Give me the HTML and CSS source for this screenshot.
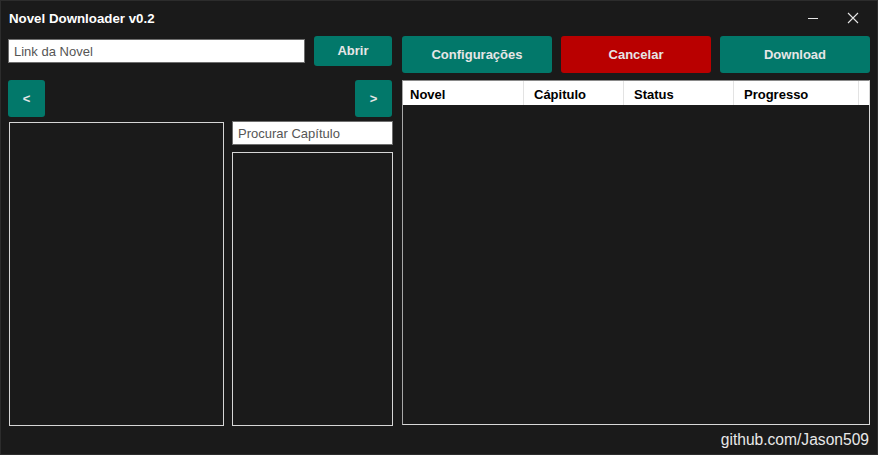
FILE: index.html
```html
<!DOCTYPE html>
<html lang="pt">
<head>
<meta charset="utf-8">
<title>Novel Downloader v0.2</title>
<link rel="stylesheet" href="styles.css">
</head>
<body>
<div class="window">
  <div class="titlebar">
    <span class="title">Novel Downloader v0.2</span>
    <div class="controls">
      <svg class="ctl ctl-min" width="12" height="12" viewBox="0 0 12 12"><line x1="1" y1="6.5" x2="11" y2="6.5" stroke="#e6e6e6" stroke-width="1"/></svg>
      <svg class="ctl ctl-close" width="12" height="12" viewBox="0 0 12 12"><path d="M1 1L11 11M11 1L1 11" stroke="#e6e6e6" stroke-width="1.1"/></svg>
    </div>
  </div>
  <div class="main">
    <div class="left">
      <div class="row-open">
        <div class="input link">Link da Novel</div>
        <div class="btn btn-open">Abrir</div>
      </div>
      <div class="row-nav">
        <div class="btn btn-nav">&lt;</div>
        <div class="btn btn-nav">&gt;</div>
      </div>
      <div class="row-lists">
        <div class="listbox novels"></div>
        <div class="chapters">
          <div class="input search">Procurar Capítulo</div>
          <div class="listbox chapterlist"></div>
        </div>
      </div>
    </div>
    <div class="right">
      <div class="actions">
        <div class="btn btn-big">Configurações</div>
        <div class="btn btn-big btn-red">Cancelar</div>
        <div class="btn btn-big">Download</div>
      </div>
      <div class="table">
        <div class="thead">
          <div class="th c1">Novel</div>
          <div class="th c2">Cápitulo</div>
          <div class="th c3">Status</div>
          <div class="th c4">Progresso</div>
          <div class="th c5"></div>
        </div>
        <div class="tbody"></div>
      </div>
    </div>
  </div>
  <div class="footer">github.com/Jason509</div>
</div>
</body>
</html>
```

FILE: styles.css
```css
* { box-sizing: border-box; }
html, body { margin: 0; padding: 0; background: #1a1a1a; }
body { font-family: "Liberation Sans", Arial, sans-serif; }

.window {
  width: 878px;
  height: 455px;
  border: 1px solid #2c2c2c;
  background: #1a1a1a;
  display: flex;
  flex-direction: column;
  overflow: hidden;
}

.titlebar {
  height: 35px;
  display: flex;
  align-items: center;
  justify-content: space-between;
  padding-left: 8px;
  padding-right: 18px;
}
.title {
  color: #ffffff;
  font-weight: bold;
  font-size: 13.3px;
  margin-top: -1px;
}
.controls {
  display: flex;
  align-items: center;
  gap: 28px;
  margin-top: -2px;
}
.ctl { display: block; }

.main {
  display: flex;
  padding-left: 7px;
  gap: 10px;
}

.left {
  width: 384px;
  flex-shrink: 0;
  display: flex;
  flex-direction: column;
}

.btn {
  background: #02786a;
  color: #e6e6e6;
  font-weight: bold;
  font-size: 13px;
  border-radius: 3px;
  display: flex;
  align-items: center;
  justify-content: center;
  flex-shrink: 0;
}

.row-open {
  display: flex;
  align-items: flex-start;
  height: 30px;
}
.input {
  background: #ffffff;
  border: 1px solid #6e6e6e;
  color: #555555;
  font-size: 13px;
  display: flex;
  align-items: center;
  padding-left: 5px;
  flex-shrink: 0;
}
.link {
  width: 297px;
  height: 24px;
  margin-top: 3px;
}
.btn-open {
  width: 78px;
  height: 30px;
  margin-left: 9px;
  padding-bottom: 2px;
}

.row-nav {
  display: flex;
  justify-content: space-between;
  margin-top: 14px;
  height: 37px;
}
.btn-nav {
  width: 37px;
  height: 37px;
}

.row-lists {
  display: flex;
  margin-top: 4px;
}
.listbox {
  border: 1px solid #d6d6d6;
  background: #1a1a1a;
  flex-shrink: 0;
}
.novels {
  width: 215px;
  height: 304px;
  margin-top: 1px;
  margin-left: 1px;
}
.chapters {
  margin-left: 8px;
  width: 161px;
  flex-shrink: 0;
  display: flex;
  flex-direction: column;
}
.search {
  height: 24px;
  width: 161px;
}
.chapterlist {
  margin-top: 7px;
  height: 274px;
  width: 161px;
}

.right {
  width: 468px;
  flex-shrink: 0;
  display: flex;
  flex-direction: column;
}
.actions {
  display: flex;
  justify-content: space-between;
  height: 37px;
}
.btn-big {
  width: 150px;
  height: 37px;
  font-size: 13px;
}
.btn-red { background: #b90000; }

.table {
  margin-top: 7px;
  height: 345px;
  border: 1px solid #d8d8d8;
  border-top-color: #8a8a8a;
  border-left-color: #a8a8a8;
  display: flex;
  flex-direction: column;
  background: #1a1a1a;
}
.thead {
  display: flex;
  height: 24px;
  background: #ffffff;
}
.th {
  color: #000000;
  font-weight: bold;
  font-size: 13px;
  display: flex;
  align-items: center;
  border-right: 1px solid #e3e3e3;
  padding-left: 10px;
  padding-top: 2px;
  flex-shrink: 0;
}
.c1 { width: 121px; padding-left: 7px; }
.c2 { width: 100px; }
.c3 { width: 110px; }
.c4 { width: 125px; }
.c5 { flex: 1; border-right: none; }
.tbody { flex: 1; }

.footer {
  margin-top: 4px;
  padding-right: 8px;
  text-align: right;
  color: #e8e8e8;
  font-size: 15.6px;
  line-height: 19px;
}
```
